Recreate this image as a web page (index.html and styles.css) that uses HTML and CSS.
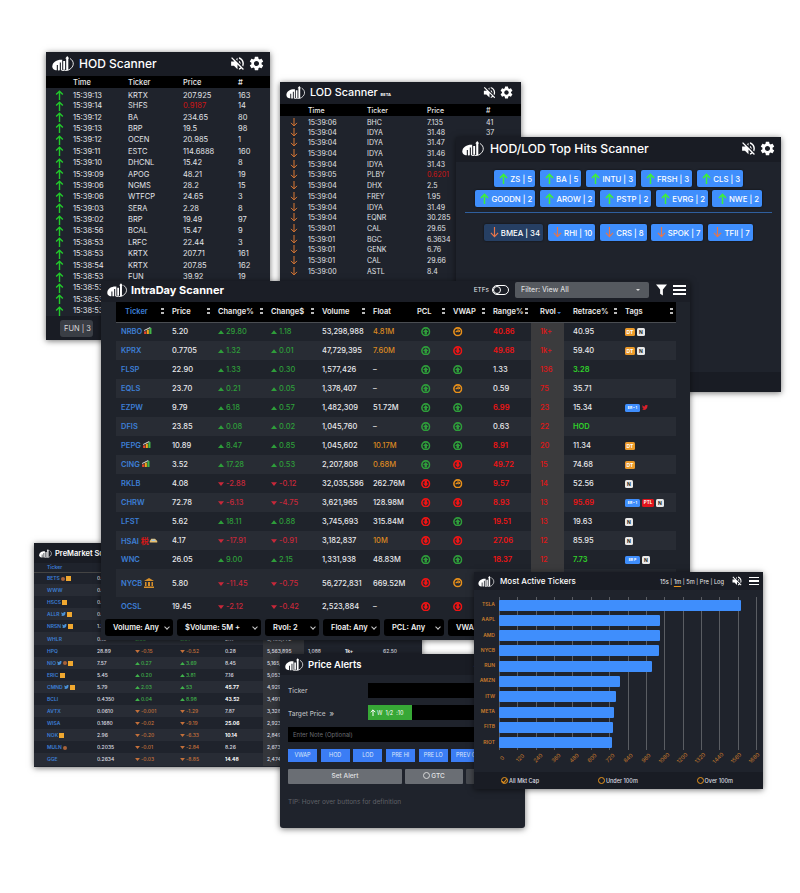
FILE: index.html
```html
<!DOCTYPE html>
<html lang="en">

<head>
    <meta charset="UTF-8">
    <title>Scanners</title>
    <link rel="stylesheet" href="styles.css">
</head>

<body>
    <!-- shared icons -->
    <svg class="sprite" width="0" height="0">
        <symbol id="logo" viewBox="0 0 24 15">
            <path fill="#fff" d="M0.300 10.500C0.300 5.500 6 3.300 10.200 3.800L10.200 14C5 14.900 0.300 14.500 0.300 10.500Z" />
            <path fill="#1a1d25" d="M4.800 9h1.100v6H4.800zM7.800 6.500h1.100V15H7.800z" />
            <path fill="#fff" d="M11.200 5h1.900v8.800h-1.900zM14.200 2h2.100v12h-2.100zM15.250 0l2 2.500h-4z" />
            <path fill="none" stroke="#fff" stroke-width="0.900" d="M18 2.500C22.500 5 23 11.500 15.500 14.500C13.500 14.900 11.500 14.600 9.500 14.300" />
        </symbol>
        <symbol id="mute" viewBox="0 0 24 24">
            <path fill="#fff" d="M16.500 12c0-1.770-1.020-3.290-2.500-4.030v2.210l2.450 2.450c.03-.2.050-.41.050-.63zm2.500 0c0 .94-.2 1.820-.54 2.640l1.510 1.510C20.630 14.910 21 13.500 21 12c0-4.280-2.990-7.860-7-8.770v2.060c2.890.86 5 3.540 5 6.710zM4.270 3L3 4.270 7.730 9H3v6h4l5 5v-6.730l4.250 4.250c-.67.52-1.420.93-2.250 1.180v2.060c1.380-.31 2.630-.95 3.690-1.810L19.730 21 21 19.730l-9-9L4.270 3zM12 4L9.910 6.090 12 8.180V4z" />
        </symbol>
        <symbol id="gear" viewBox="0 0 24 24">
            <path fill="#fff" d="M19.140 12.940c.04-.3.06-.61.06-.94 0-.32-.02-.64-.07-.94l2.030-1.580c.18-.14.23-.41.12-.61l-1.920-3.320c-.12-.22-.37-.29-.59-.22l-2.390.96c-.5-.38-1.030-.7-1.620-.94l-.36-2.540c-.04-.24-.24-.41-.48-.41h-3.840c-.24 0-.43.17-.47.41l-.36 2.540c-.59.24-1.130.57-1.620.94l-2.390-.96c-.22-.08-.47 0-.59.22L2.740 8.870c-.12.21-.08.47.12.61l2.030 1.580c-.05.3-.09.63-.09.94s.02.64.07.94l-2.030 1.580c-.18.14-.23.41-.12.61l1.920 3.320c.12.22.37.29.59.22l2.390-.96c.5.38 1.030.7 1.620.94l.36 2.540c.05.24.24.41.48.41h3.840c.24 0 .44-.17.47-.41l.36-2.540c.59-.24 1.130-.56 1.620-.94l2.390.96c.22.08.47 0 .59-.22l1.920-3.320c.12-.22.07-.47-.12-.61l-2.010-1.580zM12 15.600c-1.980 0-3.600-1.620-3.600-3.600s1.620-3.600 3.600-3.600 3.600 1.620 3.600 3.600-1.620 3.600-3.600 3.600z" />
        </symbol>
        <symbol id="up" viewBox="0 0 10 12">
            <path fill="none" stroke="currentColor" stroke-width="1.700" d="M5 12V1.500M1 5.500l4-4 4 4" />
        </symbol>
        <symbol id="down" viewBox="0 0 10 12">
            <path fill="none" stroke="currentColor" stroke-width="1.300" d="M5 0v10.500M1 6.500l4 4 4-4" />
        </symbol>
        <symbol id="tri-up" viewBox="0 0 8 5"><path fill="currentColor" d="M4 0l4 5H0z" /></symbol>
        <symbol id="tri-down" viewBox="0 0 8 5"><path fill="currentColor" d="M4 5l4-5H0z" /></symbol>
        <symbol id="c-up" viewBox="0 0 12 12">
            <circle cx="6" cy="6" r="4.900" fill="none" stroke="#2e9e3a" stroke-width="2" />
            <path fill="#2e9e3a" d="M6 2.500l3.400 3.700H7.500V9.500h-3V6.200H2.600z" />
        </symbol>
        <symbol id="c-down" viewBox="0 0 12 12">
            <circle cx="6" cy="6" r="4.900" fill="none" stroke="#f01414" stroke-width="2" />
            <path fill="#f01414" d="M6 9.500L2.600 5.800h1.900V2.500h3v3.300h1.900z" />
        </symbol>
        <symbol id="c-mid" viewBox="0 0 12 12">
            <circle cx="6" cy="6" r="4.900" fill="none" stroke="#e8901a" stroke-width="2" />
            <path fill="none" stroke="#e8901a" stroke-width="1.400" d="M3.500 6.500c1-1.800 2.500-1.800 3.500 0M5.500 3.500c2 0 3 1 3 2.800" />
        </symbol>
        <symbol id="bars" viewBox="0 0 10 8">
            <path fill="#e8432e" d="M0 5h2.400v3H0z" />
            <path fill="#f2a71c" d="M3 3h2.400v5H3z" />
            <path fill="#43b649" d="M6 1h2.400v7H6z" />
            <path fill="#ddd" d="M0 3.500L7 0v1L0 4.500z" />
        </symbol>
        <symbol id="bird" viewBox="0 0 24 20">
            <path fill="currentColor" d="M24 2.400c-.9.400-1.800.7-2.800.8 1-.6 1.800-1.600 2.200-2.700-1 .6-2 1-3.100 1.200C19.300.700 18 0 16.600 0c-2.700 0-4.900 2.200-4.900 4.900 0 .4 0 .8.100 1.100C7.700 5.800 4.100 3.900 1.700.900 1.200 1.600 1 2.500 1 3.400c0 1.700.9 3.200 2.200 4.100-.8 0-1.600-.2-2.200-.6v.1c0 2.400 1.700 4.400 3.900 4.800-.7.200-1.500.2-2.200.1.600 2 2.400 3.400 4.600 3.400-1.700 1.300-3.800 2.100-6.100 2.100-.4 0-.8 0-1.200-.1C2.200 19.200 4.800 20 7.500 20c9.100 0 14-7.500 14-14v-.6c1-.7 1.800-1.600 2.500-2.600z" />
        </symbol>
    </svg>

    <!-- HOD Scanner -->
    <section class="win win-hod">
        <header class="win-head">
            <svg class="logo"><use href="#logo" /></svg>
            <h2 class="win-title">HOD Scanner</h2>
            <svg class="head-ic"><use href="#mute" /></svg>
            <svg class="head-ic"><use href="#gear" /></svg>
        </header>
        <div class="list-body">
            <table class="hits hits-hod">
                <thead>
                    <tr><th></th><th>Time</th><th>Ticker</th><th>Price</th><th>#</th></tr>
                </thead>
                <tbody>
                    <tr><td><svg class="arr up"><use href="#up" /></svg></td><td>15:39:13</td><td>KRTX</td><td>207.925</td><td>163</td></tr>
                    <tr><td><svg class="arr up"><use href="#up" /></svg></td><td>15:39:14</td><td>SHFS</td><td class="red">0.9187</td><td>14</td></tr>
                    <tr><td><svg class="arr up"><use href="#up" /></svg></td><td>15:39:12</td><td>BA</td><td>234.65</td><td>80</td></tr>
                    <tr><td><svg class="arr up"><use href="#up" /></svg></td><td>15:39:13</td><td>BRP</td><td>19.5</td><td>98</td></tr>
                    <tr><td><svg class="arr up"><use href="#up" /></svg></td><td>15:39:12</td><td>OCEN</td><td>20.985</td><td>1</td></tr>
                    <tr><td><svg class="arr up"><use href="#up" /></svg></td><td>15:39:11</td><td>ESTC</td><td>114.6888</td><td>160</td></tr>
                    <tr><td><svg class="arr up"><use href="#up" /></svg></td><td>15:39:10</td><td>DHCNL</td><td>15.42</td><td>8</td></tr>
                    <tr><td><svg class="arr up"><use href="#up" /></svg></td><td>15:39:09</td><td>APOG</td><td>48.21</td><td>19</td></tr>
                    <tr><td><svg class="arr up"><use href="#up" /></svg></td><td>15:39:06</td><td>NGMS</td><td>28.2</td><td>15</td></tr>
                    <tr><td><svg class="arr up"><use href="#up" /></svg></td><td>15:39:06</td><td>WTFCP</td><td>24.65</td><td>3</td></tr>
                    <tr><td><svg class="arr up"><use href="#up" /></svg></td><td>15:39:03</td><td>SERA</td><td>2.28</td><td>8</td></tr>
                    <tr><td><svg class="arr up"><use href="#up" /></svg></td><td>15:39:02</td><td>BRP</td><td>19.49</td><td>97</td></tr>
                    <tr><td><svg class="arr up"><use href="#up" /></svg></td><td>15:38:56</td><td>BCAL</td><td>15.47</td><td>9</td></tr>
                    <tr><td><svg class="arr up"><use href="#up" /></svg></td><td>15:38:53</td><td>LRFC</td><td>22.44</td><td>3</td></tr>
                    <tr><td><svg class="arr up"><use href="#up" /></svg></td><td>15:38:53</td><td>KRTX</td><td>207.71</td><td>161</td></tr>
                    <tr><td><svg class="arr up"><use href="#up" /></svg></td><td>15:38:54</td><td>KRTX</td><td>207.85</td><td>162</td></tr>
                    <tr><td><svg class="arr up"><use href="#up" /></svg></td><td>15:38:53</td><td>FUN</td><td>39.92</td><td>19</td></tr>
                    <tr><td><svg class="arr up"><use href="#up" /></svg></td><td>15:38:53</td><td>FUN</td><td>39.91</td><td>18</td></tr>
                    <tr><td><svg class="arr up"><use href="#up" /></svg></td><td>15:38:53</td><td>FUN</td><td>39.90</td><td>17</td></tr>
                    <tr><td><svg class="arr up"><use href="#up" /></svg></td><td>15:38:53</td><td>FUN</td><td>39.89</td><td>16</td></tr>
                </tbody>
            </table>
        </div>
        <footer class="hod-foot"><span class="foot-pill">FUN | 3</span></footer>
    </section>

    <!-- LOD Scanner -->
    <section class="win win-lod">
        <header class="win-head">
            <svg class="logo"><use href="#logo" /></svg>
            <h2 class="win-title">LOD Scanner <small class="beta">BETA</small></h2>
            <svg class="head-ic"><use href="#mute" /></svg>
            <svg class="head-ic"><use href="#gear" /></svg>
        </header>
        <div class="list-body">
            <table class="hits hits-lod">
                <thead>
                    <tr><th></th><th>Time</th><th>Ticker</th><th>Price</th><th>#</th></tr>
                </thead>
                <tbody>
                    <tr><td><svg class="arr dn"><use href="#down" /></svg></td><td>15:39:06</td><td>BHC</td><td>7.135</td><td>41</td></tr>
                    <tr><td><svg class="arr dn"><use href="#down" /></svg></td><td>15:39:04</td><td>IDYA</td><td>31.48</td><td>37</td></tr>
                    <tr><td><svg class="arr dn"><use href="#down" /></svg></td><td>15:39:04</td><td>IDYA</td><td>31.47</td><td>36</td></tr>
                    <tr><td><svg class="arr dn"><use href="#down" /></svg></td><td>15:39:04</td><td>IDYA</td><td>31.46</td><td>35</td></tr>
                    <tr><td><svg class="arr dn"><use href="#down" /></svg></td><td>15:39:04</td><td>IDYA</td><td>31.43</td><td>34</td></tr>
                    <tr><td><svg class="arr dn"><use href="#down" /></svg></td><td>15:39:05</td><td>PLBY</td><td class="red">0.6201</td><td>8</td></tr>
                    <tr><td><svg class="arr dn"><use href="#down" /></svg></td><td>15:39:04</td><td>DHX</td><td>2.5</td><td>6</td></tr>
                    <tr><td><svg class="arr dn"><use href="#down" /></svg></td><td>15:39:04</td><td>FREY</td><td>1.95</td><td>4</td></tr>
                    <tr><td><svg class="arr dn"><use href="#down" /></svg></td><td>15:39:04</td><td>IDYA</td><td>31.49</td><td>38</td></tr>
                    <tr><td><svg class="arr dn"><use href="#down" /></svg></td><td>15:39:04</td><td>EQNR</td><td>30.285</td><td>3</td></tr>
                    <tr><td><svg class="arr dn"><use href="#down" /></svg></td><td>15:39:01</td><td>CAL</td><td>29.65</td><td>5</td></tr>
                    <tr><td><svg class="arr dn"><use href="#down" /></svg></td><td>15:39:01</td><td>BGC</td><td>6.3634</td><td>2</td></tr>
                    <tr><td><svg class="arr dn"><use href="#down" /></svg></td><td>15:39:01</td><td>GENK</td><td>6.76</td><td>7</td></tr>
                    <tr><td><svg class="arr dn"><use href="#down" /></svg></td><td>15:39:01</td><td>CAL</td><td>29.66</td><td>4</td></tr>
                    <tr><td><svg class="arr dn"><use href="#down" /></svg></td><td>15:39:00</td><td>ASTL</td><td>8.4</td><td>2</td></tr>
                </tbody>
            </table>
        </div>
    </section>

    <!-- HOD/LOD Top Hits -->
    <section class="win win-top">
        <header class="win-head">
            <svg class="logo"><use href="#logo" /></svg>
            <h2 class="win-title">HOD/LOD Top Hits Scanner</h2>
            <svg class="head-ic"><use href="#mute" /></svg>
            <svg class="head-ic"><use href="#gear" /></svg>
        </header>
        <div class="top-body">
            <div class="pill-row">
                <a class="pill"><svg class="arr-p up"><use href="#up" /></svg>ZS | 5</a>
                <a class="pill"><svg class="arr-p up"><use href="#up" /></svg>BA | 5</a>
                <a class="pill"><svg class="arr-p up"><use href="#up" /></svg>INTU | 3</a>
                <a class="pill"><svg class="arr-p up"><use href="#up" /></svg>FRSH | 3</a>
                <a class="pill"><svg class="arr-p up"><use href="#up" /></svg>CLS | 3</a>
            </div>
            <div class="pill-row">
                <a class="pill"><svg class="arr-p up"><use href="#up" /></svg>GOODN | 2</a>
                <a class="pill"><svg class="arr-p up"><use href="#up" /></svg>AROW | 2</a>
                <a class="pill"><svg class="arr-p up"><use href="#up" /></svg>PSTP | 2</a>
                <a class="pill"><svg class="arr-p up"><use href="#up" /></svg>EVRG | 2</a>
                <a class="pill"><svg class="arr-p up"><use href="#up" /></svg>NWE | 2</a>
            </div>
            <hr class="top-rule">
            <div class="pill-row">
                <a class="pill pill-dark"><svg class="arr-p dn"><use href="#down" /></svg>BMEA | 34</a>
                <a class="pill"><svg class="arr-p dn"><use href="#down" /></svg>RHI | 10</a>
                <a class="pill"><svg class="arr-p dn"><use href="#down" /></svg>CRS | 8</a>
                <a class="pill"><svg class="arr-p dn"><use href="#down" /></svg>SPOK | 7</a>
                <a class="pill"><svg class="arr-p dn"><use href="#down" /></svg>TFII | 7</a>
            </div>
        </div>
        <footer class="top-foot"></footer>
    </section>

    <!-- PreMarket Scanner -->
    <section class="win win-pre">
        <header class="win-head">
            <svg class="logo"><use href="#logo" /></svg>
            <h2 class="win-title">PreMarket Scanner</h2>
        </header>
        <table class="pre-table">
            <thead>
                <tr><th class="blue">Ticker</th><th>Price</th><th>Change%</th><th>Change$</th><th>Range%</th><th>Volume</th><th>Float</th><th>Rvol</th><th>Retrace%</th></tr>
            </thead>
            <tbody>
                <tr><td class="blue">BETS <i class="dot-o"></i><i class="t-dt"></i></td><td>0.31</td><td class="pos">0.12</td><td class="pos">0.04</td><td>4.12</td><td class="shade">9,120,551</td></tr>
                <tr><td class="blue">WWW</td><td>0.84</td><td class="pos">0.22</td><td class="pos">0.07</td><td>3.81</td><td class="shade">8,871,240</td></tr>
                <tr><td class="blue">HSCS <i class="t-dt"></i></td><td>0.55</td><td class="pos">0.31</td><td class="pos">0.05</td><td>3.22</td><td class="shade">8,240,117</td></tr>
                <tr><td class="blue">ALLR <svg class="t-bird"><use href="#bird" /></svg><i class="t-dt"></i></td><td>0.72</td><td class="pos">0.18</td><td class="pos">0.03</td><td>2.96</td><td class="shade">7,944,016</td></tr>
                <tr><td class="blue">NRSN <svg class="t-bird"><use href="#bird" /></svg><i class="t-dt"></i></td><td>1.25</td><td class="pos">0.40</td><td class="pos">0.09</td><td>2.50</td><td class="shade">7,512,903</td></tr>
                <tr><td class="blue">WHLR</td><td>0.19</td><td class="pos">0.08</td><td class="pos">0.01</td><td>2.11</td><td class="shade">6,480,772</td></tr>
                <tr><td class="blue">HPQ</td><td>28.89</td><td class="neg"><svg class="tri-s"><use href="#tri-down" /></svg>-0.15</td><td class="neg"><svg class="tri-s"><use href="#tri-down" /></svg>-0.52</td><td>0.28</td><td class="shade">5,563,895</td><td>1,088</td><td class="hi">1k+</td><td>62.50</td></tr>
                <tr><td class="blue">NIO <svg class="t-bird"><use href="#bird" /></svg><i class="dot-o"></i><i class="t-dt"></i></td><td>7.57</td><td class="pos"><svg class="tri-s"><use href="#tri-up" /></svg>0.27</td><td class="pos"><svg class="tri-s"><use href="#tri-up" /></svg>3.69</td><td>8.45</td><td class="shade">5,165,448</td></tr>
                <tr><td class="blue">ERIC <i class="t-dt"></i></td><td>5.45</td><td class="pos"><svg class="tri-s"><use href="#tri-up" /></svg>0.20</td><td class="pos"><svg class="tri-s"><use href="#tri-up" /></svg>3.81</td><td>7.16</td><td class="shade">5,053,219</td></tr>
                <tr><td class="blue">CMND <svg class="t-bird"><use href="#bird" /></svg><i class="t-dt"></i></td><td>5.79</td><td class="pos"><svg class="tri-s"><use href="#tri-up" /></svg>2.03</td><td class="pos"><svg class="tri-s"><use href="#tri-up" /></svg>53</td><td class="hi">45.77</td><td class="shade">4,929,781</td></tr>
                <tr><td class="blue">BCLI</td><td>0.4350</td><td class="pos"><svg class="tri-s"><use href="#tri-up" /></svg>0.04</td><td class="pos"><svg class="tri-s"><use href="#tri-up" /></svg>8.98</td><td class="hi">43.52</td><td class="shade">3,491,336</td></tr>
                <tr><td class="blue">AVTX</td><td>0.0610</td><td class="neg"><svg class="tri-s"><use href="#tri-down" /></svg>-0.001</td><td class="neg"><svg class="tri-s"><use href="#tri-down" /></svg>-1.29</td><td>7.87</td><td class="shade">3,328,104</td></tr>
                <tr><td class="blue">WISA</td><td>0.1680</td><td class="neg"><svg class="tri-s"><use href="#tri-down" /></svg>-0.02</td><td class="neg"><svg class="tri-s"><use href="#tri-down" /></svg>-9.19</td><td class="hi">25.06</td><td class="shade">2,923,560</td></tr>
                <tr><td class="blue">NOK <i class="t-dt"></i></td><td>2.96</td><td class="neg"><svg class="tri-s"><use href="#tri-down" /></svg>-0.20</td><td class="neg"><svg class="tri-s"><use href="#tri-down" /></svg>-6.33</td><td class="hi">10.14</td><td class="shade">2,849,127</td></tr>
                <tr><td class="blue">MULN <i class="dot-o"></i></td><td>0.2035</td><td class="neg"><svg class="tri-s"><use href="#tri-down" /></svg>-0.01</td><td class="neg"><svg class="tri-s"><use href="#tri-down" /></svg>-2.84</td><td>8.26</td><td class="shade">2,673,094</td></tr>
                <tr><td class="blue">GGE</td><td>0.2634</td><td class="neg"><svg class="tri-s"><use href="#tri-down" /></svg>-0.03</td><td class="neg"><svg class="tri-s"><use href="#tri-down" /></svg>-8.85</td><td class="hi">14.48</td><td class="shade">2,474,318</td></tr>
            </tbody>
        </table>
    </section>

    <!-- IntraDay Scanner -->
    <section class="win win-intra">
        <header class="intra-head">
            <svg class="logo"><use href="#logo" /></svg>
            <h2 class="intra-title">IntraDay Scanner</h2>
            <span class="etf-label">ETFs</span>
            <span class="toggle"><i></i></span>
            <div class="filter-select">Filter: View All<span class="caret"></span></div>
            <svg class="funnel" viewBox="0 0 12 12"><path fill="#fff" d="M0 0h12L7.500 5.500V12L4.500 10V5.500z" /></svg>
            <span class="burger"><i></i><i></i><i></i></span>
        </header>
        <table class="scan-table">
            <colgroup>
                <col class="c-ticker"><col class="c-price"><col class="c-chp"><col class="c-chd"><col class="c-vol">
                <col class="c-float"><col class="c-pcl"><col class="c-vwap"><col class="c-range"><col class="c-rvol">
                <col class="c-ret"><col class="c-tags">
            </colgroup>
            <thead>
                <tr>
                    <th class="th-ticker blue">Ticker<span class="sort"></span></th>
                    <th>Price<span class="sort"></span></th>
                    <th>Change%<span class="sort"></span></th>
                    <th>Change$<span class="sort"></span></th>
                    <th>Volume<span class="sort"></span></th>
                    <th>Float</th>
                    <th>PCL<span class="sort"></span></th>
                    <th>VWAP<span class="sort"></span></th>
                    <th>Range%<span class="sort"></span></th>
                    <th class="th-rvol">Rvol<span class="sort-active"></span></th>
                    <th class="th-ret">Retrace%<span class="sort"></span></th>
                    <th>Tags<span class="sort"></span></th>
                </tr>
            </thead>
            <tbody>
                <tr>
                    <td class="tk">NRBO <svg class="emo"><use href="#bars" /></svg></td><td>5.20</td>
                    <td class="gain"><svg class="tri"><use href="#tri-up" /></svg>29.80</td><td class="gain"><svg class="tri"><use href="#tri-up" /></svg>1.18</td>
                    <td>53,298,988</td><td class="amber">4.81M</td>
                    <td><svg class="ci"><use href="#c-up" /></svg></td><td><svg class="ci"><use href="#c-mid" /></svg></td>
                    <td class="hot">40.86</td><td class="rv">1k+</td><td class="ret">40.95</td>
                    <td><b class="tag t-o">DT</b><b class="tag t-n">N</b></td>
                </tr>
                <tr>
                    <td class="tk">KPRX</td><td>0.7705</td>
                    <td class="gain"><svg class="tri"><use href="#tri-up" /></svg>1.32</td><td class="gain"><svg class="tri"><use href="#tri-up" /></svg>0.01</td>
                    <td>47,729,395</td><td class="amber">7.60M</td>
                    <td><svg class="ci"><use href="#c-up" /></svg></td><td><svg class="ci"><use href="#c-down" /></svg></td>
                    <td class="hot">49.68</td><td class="rv">1k+</td><td class="ret">59.40</td>
                    <td><b class="tag t-o">DT</b><b class="tag t-n">N</b></td>
                </tr>
                <tr>
                    <td class="tk">FLSP</td><td>22.90</td>
                    <td class="gain"><svg class="tri"><use href="#tri-up" /></svg>1.33</td><td class="gain"><svg class="tri"><use href="#tri-up" /></svg>0.30</td>
                    <td>1,577,426</td><td>–</td>
                    <td><svg class="ci"><use href="#c-up" /></svg></td><td><svg class="ci"><use href="#c-up" /></svg></td>
                    <td>1.33</td><td class="rv">136</td><td class="ret lime">3.28</td><td></td>
                </tr>
                <tr>
                    <td class="tk">EQLS</td><td>23.70</td>
                    <td class="gain"><svg class="tri"><use href="#tri-up" /></svg>0.21</td><td class="gain"><svg class="tri"><use href="#tri-up" /></svg>0.05</td>
                    <td>1,378,407</td><td>–</td>
                    <td><svg class="ci"><use href="#c-up" /></svg></td><td><svg class="ci"><use href="#c-mid" /></svg></td>
                    <td>0.59</td><td class="rv">75</td><td class="ret">35.71</td><td></td>
                </tr>
                <tr>
                    <td class="tk">EZPW</td><td>9.79</td>
                    <td class="gain"><svg class="tri"><use href="#tri-up" /></svg>6.18</td><td class="gain"><svg class="tri"><use href="#tri-up" /></svg>0.57</td>
                    <td>1,482,309</td><td>51.72M</td>
                    <td><svg class="ci"><use href="#c-up" /></svg></td><td><svg class="ci"><use href="#c-up" /></svg></td>
                    <td class="hot">6.99</td><td class="rv">23</td><td class="ret">15.34</td>
                    <td><b class="tag t-b">ER • 1</b><svg class="tw"><use href="#bird" /></svg></td>
                </tr>
                <tr>
                    <td class="tk">DFIS</td><td>23.85</td>
                    <td class="gain"><svg class="tri"><use href="#tri-up" /></svg>0.08</td><td class="gain"><svg class="tri"><use href="#tri-up" /></svg>0.02</td>
                    <td>1,045,760</td><td>–</td>
                    <td><svg class="ci"><use href="#c-up" /></svg></td><td><svg class="ci"><use href="#c-up" /></svg></td>
                    <td>0.63</td><td class="rv">22</td><td class="ret lime">HOD</td><td></td>
                </tr>
                <tr>
                    <td class="tk">PEPG <svg class="emo"><use href="#bars" /></svg></td><td>10.89</td>
                    <td class="gain"><svg class="tri"><use href="#tri-up" /></svg>8.47</td><td class="gain"><svg class="tri"><use href="#tri-up" /></svg>0.85</td>
                    <td>1,045,602</td><td class="amber">10.17M</td>
                    <td><svg class="ci"><use href="#c-up" /></svg></td><td><svg class="ci"><use href="#c-up" /></svg></td>
                    <td class="hot">8.91</td><td class="rv">20</td><td class="ret">11.34</td>
                    <td><b class="tag t-o">DT</b></td>
                </tr>
                <tr>
                    <td class="tk">CING <svg class="emo"><use href="#bars" /></svg></td><td>3.52</td>
                    <td class="gain"><svg class="tri"><use href="#tri-up" /></svg>17.28</td><td class="gain"><svg class="tri"><use href="#tri-up" /></svg>0.53</td>
                    <td>2,207,808</td><td class="amber">0.68M</td>
                    <td><svg class="ci"><use href="#c-up" /></svg></td><td><svg class="ci"><use href="#c-down" /></svg></td>
                    <td class="hot">49.72</td><td class="rv">15</td><td class="ret">74.68</td>
                    <td><b class="tag t-o">DT</b></td>
                </tr>
                <tr>
                    <td class="tk">RKLB</td><td>4.08</td>
                    <td class="loss"><svg class="tri"><use href="#tri-down" /></svg>-2.88</td><td class="loss"><svg class="tri"><use href="#tri-down" /></svg>-0.12</td>
                    <td>32,035,586</td><td>262.76M</td>
                    <td><svg class="ci"><use href="#c-down" /></svg></td><td><svg class="ci"><use href="#c-mid" /></svg></td>
                    <td class="hot">9.57</td><td class="rv">14</td><td class="ret">52.56</td>
                    <td><b class="tag t-n">N</b></td>
                </tr>
                <tr>
                    <td class="tk">CHRW</td><td>72.78</td>
                    <td class="loss"><svg class="tri"><use href="#tri-down" /></svg>-6.13</td><td class="loss"><svg class="tri"><use href="#tri-down" /></svg>-4.75</td>
                    <td>3,621,965</td><td>128.98M</td>
                    <td><svg class="ci"><use href="#c-down" /></svg></td><td><svg class="ci"><use href="#c-down" /></svg></td>
                    <td class="hot">8.93</td><td class="rv">13</td><td class="ret hot">95.69</td>
                    <td><b class="tag t-b">ER • 1</b><b class="tag t-r">PTL</b><b class="tag t-n">N</b></td>
                </tr>
                <tr>
                    <td class="tk">LFST</td><td>5.62</td>
                    <td class="gain"><svg class="tri"><use href="#tri-up" /></svg>18.11</td><td class="gain"><svg class="tri"><use href="#tri-up" /></svg>0.88</td>
                    <td>3,745,693</td><td>315.84M</td>
                    <td><svg class="ci"><use href="#c-down" /></svg></td><td><svg class="ci"><use href="#c-up" /></svg></td>
                    <td class="hot">19.51</td><td class="rv">13</td><td class="ret">19.63</td>
                    <td><b class="tag t-n">N</b></td>
                </tr>
                <tr>
                    <td class="tk">HSAI <span class="kanji">税</span><svg class="emo" viewBox="0 0 12 7"><path fill="#e8c070" d="M1 6V4l2-3h5l3 3v2z" /><path fill="#9fc3e0" d="M4 2h3.500l1.500 2H3z" /></svg></td><td>4.17</td>
                    <td class="loss"><svg class="tri"><use href="#tri-down" /></svg>-17.91</td><td class="loss"><svg class="tri"><use href="#tri-down" /></svg>-0.91</td>
                    <td>3,182,837</td><td class="amber">10M</td>
                    <td><svg class="ci"><use href="#c-down" /></svg></td><td><svg class="ci"><use href="#c-down" /></svg></td>
                    <td class="hot">27.06</td><td class="rv">12</td><td class="ret">85.95</td>
                    <td><b class="tag t-n">N</b></td>
                </tr>
                <tr>
                    <td class="tk">WNC</td><td>26.05</td>
                    <td class="gain"><svg class="tri"><use href="#tri-up" /></svg>9.00</td><td class="gain"><svg class="tri"><use href="#tri-up" /></svg>2.15</td>
                    <td>1,331,938</td><td>48.83M</td>
                    <td><svg class="ci"><use href="#c-up" /></svg></td><td><svg class="ci"><use href="#c-up" /></svg></td>
                    <td class="hot">18.37</td><td class="rv">12</td><td class="ret lime">7.73</td>
                    <td><b class="tag t-b">ER P</b><b class="tag t-n">N</b></td>
                </tr>
                <tr class="tall">
                    <td class="tk">NYCB <svg class="bank" viewBox="0 0 10 10"><path fill="#d8902a" d="M5 0l5 3H0zM1 4h1.500v4H1zM4 4h2v4H4zM7.500 4H9v4H7.500zM0 8.500h10V10H0z" /></svg></td><td>5.80</td>
                    <td class="loss"><svg class="tri"><use href="#tri-down" /></svg>-11.45</td><td class="loss"><svg class="tri"><use href="#tri-down" /></svg>-0.75</td>
                    <td>56,272,831</td><td>669.52M</td>
                    <td><svg class="ci"><use href="#c-down" /></svg></td><td><svg class="ci"><use href="#c-mid" /></svg></td>
                    <td class="hot">12.40</td><td class="rv">11</td><td class="ret">60.12</td><td></td>
                </tr>
                <tr>
                    <td class="tk">OCSL</td><td>19.45</td>
                    <td class="loss"><svg class="tri"><use href="#tri-down" /></svg>-2.12</td><td class="loss"><svg class="tri"><use href="#tri-down" /></svg>-0.42</td>
                    <td>2,523,884</td><td>–</td>
                    <td><svg class="ci"><use href="#c-down" /></svg></td><td><svg class="ci"><use href="#c-down" /></svg></td>
                    <td class="hot">5.10</td><td class="rv">11</td><td class="ret">44.30</td><td></td>
                </tr>
            </tbody>
        </table>
        <div class="filter-bar">
            <span class="drop d-vol">Volume: Any</span>
            <span class="drop d-usd">$Volume: 5M +</span>
            <span class="drop d-rvol">Rvol: 2</span>
            <span class="drop d-float">Float: Any</span>
            <span class="drop d-pcl">PCL: Any</span>
            <span class="drop d-vwap">VWAP: Any</span>
        </div>
    </section>

    <!-- Price Alerts -->
    <section class="win win-alert">
        <header class="win-head">
            <svg class="logo"><use href="#logo" /></svg>
            <h2 class="alert-title">Price Alerts</h2>
            <nav class="alert-nav"><u>Add</u> | Active | Triggered</nav>
        </header>
        <div class="alert-body">
            <div class="form-row">
                <label class="form-label">Ticker</label>
                <div class="black-field"></div>
            </div>
            <div class="form-row">
                <label class="form-label">Target Price <span class="chev">»</span></label>
                <div class="black-field"><span class="green-box"><svg class="arr-w"><use href="#up" /></svg>W &nbsp;1/2 &nbsp;:10</span></div>
            </div>
            <div class="note-field">Enter Note (Optional)</div>
            <div class="level-row">
                <span class="level">VWAP</span><span class="level">HOD</span><span class="level">LOD</span>
                <span class="level">PRE HI</span><span class="level">PRE LO</span><span class="level">PREV C</span>
            </div>
            <div class="action-row">
                <span class="action a-set">Set Alert</span>
                <span class="action a-gtc"><i class="radio"></i>GTC</span>
                <span class="action a-off"></span>
            </div>
            <p class="tip">TIP: Hover over buttons for definition</p>
        </div>
    </section>

    <!-- Most Active Tickers -->
    <section class="win win-active">
        <header class="win-head">
            <svg class="logo"><use href="#logo" /></svg>
            <h2 class="active-title">Most Active Tickers</h2>
            <nav class="active-nav">15s | <u>1m</u> | 5m | Pre | Log</nav>
            <svg class="head-ic"><use href="#mute" /></svg>
            <span class="burger"><i></i><i></i><i></i></span>
        </header>
        <div class="chart">
            <div class="chart-labels">
                <span>TSLA</span><span>AAPL</span><span>AMD</span><span>NYCB</span><span>RUN</span>
                <span>AMZN</span><span>ITW</span><span>META</span><span>FITB</span><span>RIOT</span>
            </div>
            <div class="chart-plot">
                <div class="bar" style="width:242px"></div>
                <div class="bar" style="width:161px"></div>
                <div class="bar" style="width:161px"></div>
                <div class="bar" style="width:160px"></div>
                <div class="bar" style="width:153px"></div>
                <div class="bar" style="width:121px"></div>
                <div class="bar" style="width:117px"></div>
                <div class="bar" style="width:115px"></div>
                <div class="bar" style="width:114px"></div>
                <div class="bar" style="width:113px"></div>
            </div>
        </div>
        <div class="ticks">
            <span>0</span><span>120</span><span>240</span><span>360</span><span>480</span>
            <span>600</span><span>720</span><span>840</span><span>960</span><span>1080</span>
            <span>1200</span><span>1320</span><span>1440</span><span>1560</span><span>1680</span>
        </div>
        <footer class="cap-foot">
            <span class="cap"><i class="radio radio-on radio-check"></i>All Mkt Cap</span>
            <span class="cap"><i class="radio radio-on"></i>Under 100m</span>
            <span class="cap"><i class="radio radio-on"></i>Over 100m</span>
        </footer>
    </section>
</body>

</html>
```
FILE: styles.css
```css
* {
    box-sizing: border-box;
}

body {
    margin: 0;
    width: 800px;
    height: 893px;
    background: #fff;
    overflow: hidden;
    position: relative;
    font-family: 'Inter', 'Open Sans', sans-serif;
    color: #e6e7ea;
}

.sprite {
    position: absolute;
}

.blue {
    color: #3d7fd6;
}

.red {
    color: #d01414;
}

/* Windows */
.win {
    position: absolute;
    background: #1f232c;
    box-shadow: 0 1px 6px rgba(0, 0, 0, 0.55);
    display: flex;
    flex-direction: column;
    overflow: hidden;
}

.win-hod {
    left: 46px;
    top: 52px;
    width: 224px;
    height: 288px;
    z-index: 1;
}

.win-lod {
    left: 280px;
    top: 82px;
    width: 241px;
    height: 210px;
    z-index: 1;
}

.win-top {
    left: 456px;
    top: 137px;
    width: 325px;
    height: 255px;
    z-index: 2;
}

.win-pre {
    left: 34px;
    top: 543px;
    width: 388px;
    height: 224px;
    z-index: 2;
}

.win-intra {
    left: 101px;
    top: 281px;
    width: 589px;
    height: 359px;
    z-index: 3;
    background: #1f232b;
}

.win-alert {
    left: 280px;
    top: 654px;
    width: 245px;
    height: 174px;
    z-index: 4;
    border-radius: 0 0 3px 3px;
}

.win-active {
    left: 474px;
    top: 572px;
    width: 289px;
    height: 217px;
    z-index: 5;
}

/* Window heads */
.win-head {
    display: flex;
    align-items: center;
    background: #191c24;
    flex: none;
}

.logo {
    width: 24px;
    height: 15px;
    flex: none;
}

.win-title {
    margin: 0 auto 0 3px;
    font-size: 12px;
    font-weight: 500;
    color: #fff;
    white-space: nowrap;
}

.head-ic {
    width: 17px;
    height: 17px;
    margin-left: 2px;
    flex: none;
}

.win-hod .win-head {
    height: 24px;
    padding: 0 5px 2px 6px;
}

.win-lod .win-head {
    height: 22px;
    padding: 0 7px 1px 6px;
}

.win-lod .logo {
    width: 21px;
    height: 13px;
}

.win-lod .win-title {
    font-size: 10.800px;
}

.beta {
    font-size: 4px;
    font-weight: 700;
}

.win-lod .head-ic {
    width: 15px;
    height: 15px;
}

.win-top .win-head {
    height: 25px;
    padding: 0 5px 2px 6px;
}

.win-top .win-title {
    font-size: 12.200px;
    margin-left: 4px;
}

/* Hit lists */
.list-body {
    flex: 1;
    overflow: hidden;
}

.hits {
    border-collapse: collapse;
    table-layout: fixed;
    font-size: 7.500px;
    color: #e2e4e8;
}

.hits th {
    background: #000;
    font-weight: 500;
    text-align: left;
    padding: 0;
    height: 12px;
    color: #e8e8e8;
}

.hits td {
    padding: 0;
    white-space: nowrap;
}

.hits-hod {
    width: 224px;
    margin-bottom: 2px;
}

.hits-hod th:nth-child(1) { width: 27px; }
.hits-hod th:nth-child(2),
.hits-hod th:nth-child(3),
.hits-hod th:nth-child(4) { width: 55px; }

.hits-hod tr {
    height: 11.400px;
}

.hits-hod tbody tr:first-child td {
    padding-top: 2px;
}

.hits-lod {
    width: 241px;
}

.hits-lod th:nth-child(1) { width: 28px; }
.hits-lod th:nth-child(2) { width: 59px; }
.hits-lod th:nth-child(3) { width: 60px; }
.hits-lod th:nth-child(4) { width: 59px; }

.hits-lod tr {
    height: 10.730px;
}

.hits-lod tbody tr:first-child td {
    padding-top: 1.500px;
}

.hits-lod {
    font-size: 7px;
}

.arr {
    display: block;
    width: 100%;
    height: 10px;
}

.arr.up {
    color: #22c92b;
}

.arr.dn {
    color: #e07a34;
    height: 9px;
}

.hits tbody td:first-child {
    text-align: center;
}

.hod-foot {
    display: flex;
    align-items: flex-start;
    height: 24px;
    flex: none;
    background: #191c24;
    padding: 4px 0 0 14px;
}

.foot-pill {
    background: #3a3e45;
    color: #d8d8d8;
    border-radius: 3px;
    font-size: 7.500px;
    line-height: 17px;
    padding: 0 4px;
    width: 33px;
    white-space: nowrap;
}

/* Top hits */
.top-body {
    flex: 1;
    padding: 8px 9px 0;
}

.pill-row {
    display: flex;
    justify-content: center;
    gap: 4.500px;
    margin-bottom: 3px;
}

.pill {
    display: flex;
    align-items: center;
    gap: 2px;
    height: 17px;
    padding: 0 3px 0 5.500px;
    background: #3f8efc;
    border-radius: 2px;
    color: #fff;
    font-size: 7.800px;
    font-weight: 500;
    white-space: nowrap;
    box-shadow: 0 0 2px rgba(0, 0, 0, 0.7);
}

.pill-dark {
    background: #263f63;
}

.arr-p {
    width: 9px;
    height: 11px;
}

.arr-p.up {
    color: #3ef03a;
}

.arr-p.dn {
    color: #e8764a;
}

.top-rule {
    border: 0;
    border-top: 1px solid #2f5f9e;
    margin: 5px 0 11px;
}

.top-foot {
    height: 20px;
    flex: none;
    background: #191c24;
}

/* PreMarket */
.win-pre .win-head {
    height: 20px;
    padding: 0 5px;
}

.win-pre .logo {
    width: 14px;
    height: 9px;
}

.win-pre .win-title {
    font-size: 7.500px;
    font-weight: 600;
    margin-left: 2px;
}

.pre-table {
    border-collapse: collapse;
    table-layout: fixed;
    width: 388px;
    font-size: 5px;
    font-weight: 500;
    color: #dcdde0;
}

.pre-table th {
    text-align: left;
    font-weight: 500;
    padding: 0 0 0 13px;
    height: 9px;
    border-bottom: 1px solid #444;
    white-space: nowrap;
    overflow: hidden;
}

.pre-table th:nth-child(1) { width: 63px; }
.pre-table th:nth-child(2) { width: 38px; }
.pre-table th:nth-child(3) { width: 45px; }
.pre-table th:nth-child(4) { width: 45px; }
.pre-table th:nth-child(5) { width: 38px; }
.pre-table th:nth-child(6) { width: 41px; }
.pre-table th:nth-child(7) { width: 37px; }
.pre-table th:nth-child(8) { width: 38px; }

.pre-table td {
    padding: 0 0 0 13px;
    height: 12.100px;
    white-space: nowrap;
    overflow: hidden;
}

.pre-table td:not(:first-child) {
    padding-left: 0;
}

.pre-table td:nth-child(n+6) {
    padding-left: 4px;
}

.pre-table tbody tr:nth-child(even) {
    background: #282c35;
}

.pre-table .pos {
    color: #3fb24a;
}

.pre-table .neg {
    color: #c4703a;
}

.pre-table .hi {
    color: #fff;
    font-weight: 700;
}

.pre-table .shade {
    background: #34363b;
}

.pre-table .blue {
    font-weight: 600;
}

.tri-s {
    width: 5px;
    height: 3px;
    margin-right: 1px;
}

.t-dt {
    display: inline-block;
    width: 5px;
    height: 5px;
    background: #f0a830;
    vertical-align: -1px;
}

.dot-o {
    display: inline-block;
    width: 4px;
    height: 4px;
    border-radius: 50%;
    background: #a8623a;
    vertical-align: -0.500px;
    margin-right: 1px;
}

.t-bird {
    width: 5px;
    height: 4px;
    color: #4a90d6;
    margin-right: 1px;
}

/* IntraDay */
.intra-head {
    display: flex;
    align-items: center;
    height: 21px;
    padding: 0 4px 3px 6px;
    background: #1b1e26;
}

.intra-head .logo {
    width: 22px;
    height: 14px;
}

.intra-title {
    margin: 0 auto 0 2px;
    font-size: 11px;
    font-weight: 700;
    color: #fff;
    white-space: nowrap;
}

.etf-label {
    font-size: 6.500px;
}

.toggle {
    display: inline-block;
    width: 17px;
    height: 10px;
    border: 1px solid #fff;
    border-radius: 5px;
    margin: 0 6px 0 3px;
    position: relative;
}

.toggle i {
    display: block;
    width: 8px;
    height: 8px;
    border: 1px solid #fff;
    border-radius: 50%;
}

.filter-select {
    position: relative;
    width: 134px;
    height: 16px;
    line-height: 16px;
    padding-left: 6px;
    background: #55595f;
    border-radius: 2px;
    font-size: 7px;
    font-weight: 500;
    color: #d8d9db;
}

.caret {
    position: absolute;
    right: 9px;
    top: 7px;
    border: 2px solid transparent;
    border-top-color: #ddd;
}

.funnel {
    width: 11px;
    height: 12px;
    margin: 0 6px 0 7px;
}

.burger {
    display: flex;
    flex-direction: column;
    justify-content: space-between;
    width: 13px;
    height: 10px;
    flex: none;
}

.burger i {
    height: 2px;
    background: #fff;
}

.scan-table {
    border-collapse: collapse;
    table-layout: fixed;
    width: 560px;
    margin-left: 15px;
    font-size: 7.500px;
    font-weight: 500;
    color: #e8e9eb;
}

.c-ticker { width: 51px; }
.c-price { width: 46px; }
.c-chp { width: 53px; }
.c-chd { width: 51px; }
.c-vol { width: 51px; }
.c-float { width: 44px; }
.c-pcl { width: 36px; }
.c-vwap { width: 40px; }
.c-range { width: 43px; }
.c-rvol { width: 33px; }
.c-ret { width: 56px; }
.c-tags { width: 56px; }

.scan-table th {
    background: #000;
    height: 20px;
    padding: 0 0 0 5px;
    text-align: left;
    font-weight: 600;
    color: #eee;
    border-bottom: 1px solid #4a4d52;
    position: relative;
    white-space: nowrap;
}

.scan-table .th-ticker {
    padding-left: 9px;
    color: #3d7fd6;
}

.scan-table .th-rvol,
.scan-table .th-ret,
.scan-table .ret {
    padding-left: 9px;
}

.sort::after {
    content: "";
    position: absolute;
    right: 3px;
    top: 6px;
    width: 3px;
    height: 6px;
    background: linear-gradient(#bbb 40%, transparent 40% 60%, #bbb 60%);
}

.sort-active::after {
    content: "";
    position: absolute;
    right: 3px;
    top: 10px;
    border: 2px solid transparent;
    border-top-color: #3d7fd6;
}

.scan-table td {
    padding: 0 0 0 5px;
    height: 19px;
    white-space: nowrap;
}

.scan-table .tall td {
    height: 28px;
}

.scan-table tbody tr:nth-child(even) {
    background: #282c34;
}

.scan-table tbody tr.tall {
    background: #262a32;
}

.scan-table .tk {
    color: #3d7fd6;
    font-weight: 600;
}

.gain {
    color: #2e9e3a;
}

.loss {
    color: #c8283a;
}

.tri {
    width: 6px;
    height: 4px;
    margin-right: 2px;
}

.amber {
    color: #dd8a22;
}

.hot {
    color: #f01414;
    font-weight: 600;
}

.lime {
    color: #2fd32a;
    font-weight: 600;
}

.scan-table .rv {
    background: #3b3b3d;
    color: #e01616;
    padding-left: 9px;
}

.ci {
    display: block;
    width: 9.500px;
    height: 9.500px;
    margin-left: 4px;
}

.scan-table td:nth-child(8) .ci {
    margin-left: 0;
}

.emo {
    width: 9px;
    height: 7px;
}

.kanji {
    color: #d81818;
    font-family: 'Noto Sans CJK SC', sans-serif;
    font-size: 8px;
    font-weight: 700;
}

.bank {
    width: 10px;
    height: 10px;
    vertical-align: -2px;
}

.tag {
    display: inline-block;
    margin-right: 2px;
    border-radius: 1.500px;
    font-size: 5px;
    line-height: 8px;
    text-align: center;
    vertical-align: middle;
}

.t-o {
    width: 10px;
    background: #eb9a2a;
    color: #fff;
}

.t-n {
    width: 8px;
    background: #e8e8e8;
    color: #222;
}

.t-b {
    width: 15px;
    background: #3f8efc;
    color: #fff;
    font-size: 3.500px;
}

.t-r {
    width: 12px;
    background: #e0141c;
    color: #fff;
    font-size: 4.500px;
}

.tw {
    width: 6px;
    height: 5px;
    color: #d8202a;
}

.filter-bar {
    display: flex;
    gap: 4px;
    padding-left: 4px;
    margin-top: 3px;
}

.drop {
    position: relative;
    height: 17px;
    line-height: 17px;
    padding-left: 8px;
    background: #000;
    border-radius: 3px;
    font-size: 7.500px;
    font-weight: 600;
    color: #f2f2f2;
    white-space: nowrap;
    flex: none;
}

.drop::after {
    content: "";
    position: absolute;
    right: 4px;
    top: 6px;
    width: 3px;
    height: 3px;
    border-right: 1px solid #ccc;
    border-bottom: 1px solid #ccc;
    transform: rotate(45deg);
}

.d-vol { width: 68px; }
.d-usd { width: 84px; }
.d-rvol { width: 54px; }
.d-float { width: 57px; }
.d-pcl { width: 60px; }
.d-vwap { width: 60px; }

/* Price alerts */
.win-alert .win-head {
    height: 21px;
    padding: 0 5px 0 5px;
}

.win-alert .logo {
    width: 20px;
    height: 13px;
}

.alert-title {
    margin: 0 auto 0 3px;
    font-size: 9.500px;
    font-weight: 600;
    color: #fff;
    white-space: nowrap;
}

.alert-nav {
    font-size: 6px;
    color: #ddd;
    white-space: nowrap;
    margin-right: -44px;
    width: 90px;
}

.alert-nav u,
.active-nav u {
    text-decoration-color: #e8941c;
    text-underline-offset: 1.500px;
}

.alert-body {
    padding: 8px 0 0 8px;
}

.form-row {
    display: flex;
    align-items: center;
    height: 15px;
    margin-bottom: 7px;
}

.form-label {
    width: 80px;
    font-size: 6.500px;
    font-weight: 500;
    color: #b8babd;
    white-space: nowrap;
}

.chev {
    font-size: 8px;
    margin-left: 2px;
}

.black-field {
    width: 149px;
    height: 15px;
    background: #000;
    margin-left: 0;
}

.green-box {
    display: flex;
    align-items: center;
    width: 44px;
    height: 15px;
    background: #37a836;
    color: #fff;
    font-size: 5.500px;
    white-space: nowrap;
    padding-left: 2px;
}

.arr-w {
    width: 6px;
    height: 7px;
    color: #fff;
    margin-right: 1px;
}

.note-field {
    width: 229px;
    height: 15px;
    line-height: 15px;
    margin-top: 7px;
    padding-left: 5px;
    background: #000;
    font-size: 6px;
    color: #6a6d72;
}

.level-row {
    display: flex;
    gap: 3.700px;
    margin-top: 7px;
}

.level {
    width: 29px;
    height: 12.500px;
    line-height: 12.500px;
    background: #3b7df5;
    text-align: center;
    font-size: 5.500px;
    color: #dfe8fa;
    white-space: nowrap;
    overflow: hidden;
    flex: none;
}

.action-row {
    display: flex;
    gap: 3px;
    margin-top: 7px;
}

.action {
    height: 15px;
    line-height: 15px;
    background: #6a6e74;
    border-radius: 1px;
    text-align: center;
    font-size: 6.500px;
    font-weight: 500;
    color: #e2e3e5;
    flex: none;
}

.a-set { width: 114px; }
.a-gtc { width: 58px; }
.a-off { width: 50px; background: #44474d; }

.radio {
    display: inline-block;
    width: 7px;
    height: 7px;
    border: 1px solid #d8d8d8;
    border-radius: 50%;
    margin-right: 1px;
    vertical-align: -1.500px;
}

.tip {
    margin: 14px 0 0;
    font-size: 6.500px;
    color: #5f6268;
}

/* Most active */
.win-active .win-head {
    height: 18px;
    padding: 0 4px 0 4px;
}

.win-active .logo {
    width: 18px;
    height: 11px;
}

.active-title {
    margin: 0 auto 0 4px;
    font-size: 8px;
    font-weight: 500;
    color: #fff;
    white-space: nowrap;
}

.active-nav {
    font-size: 5.700px;
    color: #eee;
    margin-right: 5px;
    white-space: nowrap;
}

.win-active .head-ic {
    width: 12px;
    height: 12px;
    margin-right: 6px;
}

.win-active .burger {
    width: 10px;
    height: 9px;
}

.win-active .burger i {
    height: 1.300px;
}

.chart {
    display: flex;
    height: 153px;
    margin-top: 7px;
}

.chart-labels {
    width: 25px;
    display: flex;
    flex-direction: column;
    padding-top: 0;
}

.chart-labels span {
    height: 15.300px;
    line-height: 15.300px;
    padding-right: 4px;
    text-align: right;
    font-size: 5px;
    font-weight: 600;
    color: #c97c2c;
}

.chart-plot {
    flex: 1;
    padding-top: 2.500px;
    background: repeating-linear-gradient(to right, #5a5d63 0 1px, transparent 1px 18.360px);
}

.bar {
    height: 11px;
    margin-bottom: 4.300px;
    background: #3f8efc;
    border-radius: 1px;
}

.ticks {
    display: flex;
    margin: 5px 0 0 19px;
    flex: none;
}

.ticks span {
    width: 18.360px;
    text-align: center;
    font-size: 5.500px;
    color: #c97c2c;
    transform: rotate(-45deg);
    white-space: nowrap;
}

.cap-foot {
    position: absolute;
    left: 0;
    right: 0;
    bottom: 0;
    height: 17px;
    background: #191c24;
    display: flex;
    align-items: center;
    justify-content: space-between;
    padding: 0 30px 0 27px;
}

.cap {
    font-size: 5.500px;
    font-weight: 500;
    color: #dcdde0;
    white-space: nowrap;
}

.radio-on {
    position: relative;
    border-color: #e8941c;
    margin-right: 1px;
}

.radio-check::after {
    content: "";
    position: absolute;
    left: 1px;
    top: 0;
    width: 2px;
    height: 3.500px;
    border-right: 1px solid #e8941c;
    border-bottom: 1px solid #e8941c;
    transform: rotate(40deg);
}
```
